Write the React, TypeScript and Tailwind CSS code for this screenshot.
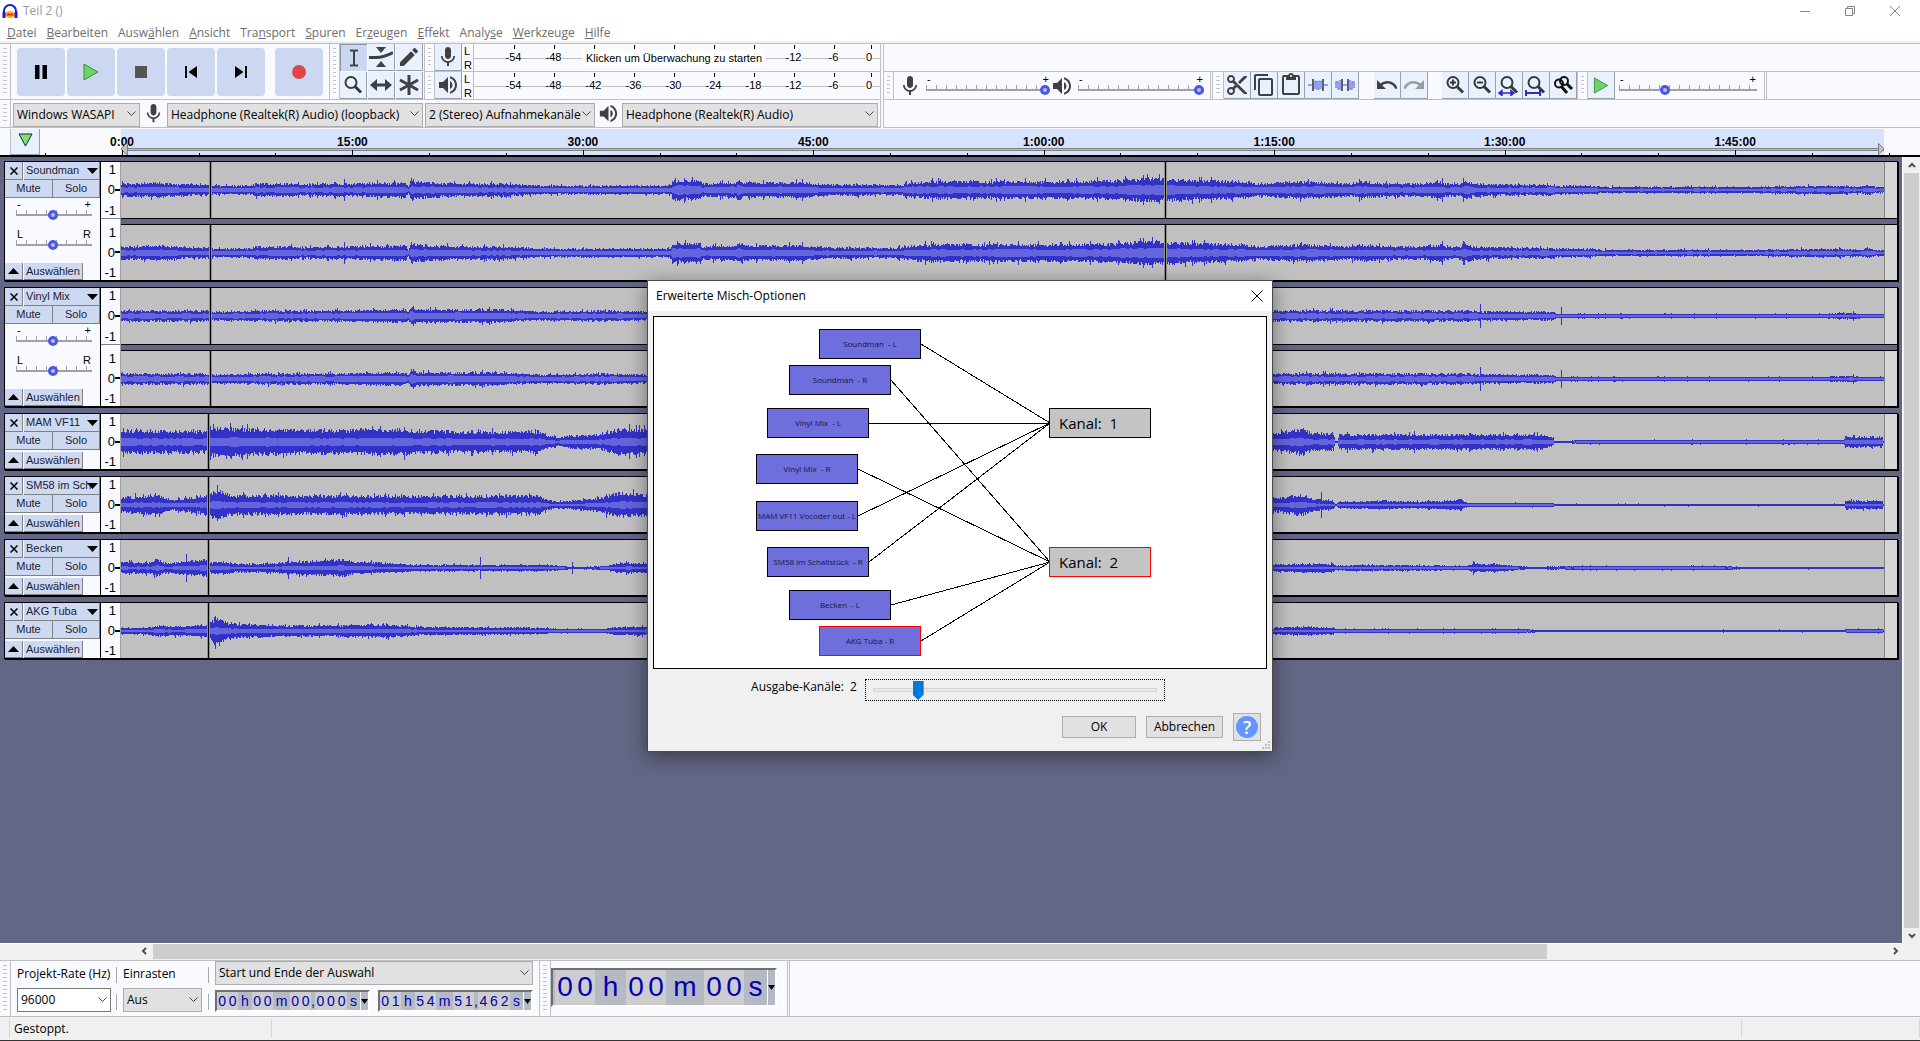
import { Fragment, ReactNode } from 'react';
import {
  MdContentCopy,
  MdContentCut,
  MdContentPaste,
  MdEdit,
  MdMic,
  MdRedo,
  MdSkipNext,
  MdSkipPrevious,
  MdUndo,
  MdVolumeUp,
} from 'react-icons/md';

// [x in px from clip start, peak height in px]
type Envelope = [number, number][];

interface Track {
  name: string;
  stereo: boolean;
  cuts: number[];
  envelope: Envelope;
  spikes: Envelope;
  seed: number;
  rms: number;
}

const CLIP_WIDTH = 1764;
const CHANNEL_CENTER = 28;

const tracks: Track[] = [
  {
    name: 'Soundman',
    stereo: true,
    cuts: [89, 1044],
    seed: 11,
    rms: 0.45,
    envelope: [
      [0, 6], [39, 7], [60, 5], [87, 5], [92, 4], [130, 4], [135, 6], [170, 6], [180, 5], [220, 6], [284, 7], [287, 3], [290, 10],
      [294, 8], [310, 7], [340, 6], [380, 6], [400, 5], [420, 4], [545, 4], [550, 5], [551, 9], [579, 9], [581, 6], [614, 7],
      [617, 10], [622, 7], [660, 7], [681, 7], [710, 5], [780, 5], [792, 7], [810, 8], [860, 8], [900, 8], [960, 8], [1000, 9],
      [1030, 11], [1070, 9], [1120, 8], [1139, 6], [1179, 8], [1185, 8], [1210, 7], [1230, 6], [1240, 8], [1264, 6], [1300, 6],
      [1319, 8], [1324, 6], [1339, 6], [1343, 9], [1352, 6], [1390, 5], [1433, 5], [1434, 4], [1469, 4], [1480, 3], [1580, 3],
      [1630, 3], [1710, 4], [1740, 3], [1746, 5], [1754, 3], [1763, 3],
    ],
    spikes: [[223, 11], [681, 11], [1022, 15], [1321, 12], [1342, 12]],
  },
  {
    name: 'Vinyl Mix',
    stereo: true,
    cuts: [89],
    seed: 47,
    rms: 0.52,
    envelope: [
      [0, 5], [60, 5], [88, 5], [92, 4], [140, 5], [200, 5], [284, 6], [287, 4], [290, 9], [296, 6], [370, 6], [400, 5],
      [420, 4], [480, 5], [520, 4], [900, 5], [1352, 5], [1360, 4], [1433, 4], [1435, 2], [1700, 2], [1729, 3], [1740, 2], [1763, 2],
    ],
    spikes: [[292, 10], [1359, 12], [1440, 9], [1732, 5]],
  },
  {
    name: 'MAM VF11',
    stereo: false,
    cuts: [87],
    seed: 83,
    rms: 0.34,
    envelope: [
      [0, 11], [85, 10], [88, 13], [180, 11], [284, 12], [290, 11], [380, 9], [419, 10], [421, 8], [436, 4], [450, 6], [480, 7],
      [497, 12], [527, 11], [900, 9], [1152, 8], [1181, 12], [1190, 8], [1212, 8], [1214, 1], [1216, 1], [1218, 7], [1345, 7],
      [1420, 7], [1432, 4], [1433, 1], [1449, 1], [1455, 2], [1723, 2], [1724, 5], [1761, 5], [1762, 1],
    ],
    spikes: [[497, 14], [1182, 14], [1293, 11]],
  },
  {
    name: 'SM58 im Schallstück',
    stereo: false,
    cuts: [87],
    seed: 131,
    rms: 0.3,
    envelope: [
      [0, 7], [35, 9], [50, 5], [80, 8], [88, 11], [96, 13], [112, 9], [180, 9], [300, 8], [419, 9], [421, 6], [436, 3],
      [475, 6], [497, 11], [527, 10], [900, 8], [1152, 6], [1181, 10], [1190, 6], [1212, 4], [1214, 1], [1218, 3], [1262, 4],
      [1300, 3], [1340, 5], [1346, 2], [1432, 2], [1433, 1], [1723, 1], [1724, 4], [1761, 4], [1762, 1],
    ],
    spikes: [[34, 12], [264, 12], [1200, 13]],
  },
  {
    name: 'Becken',
    stereo: false,
    cuts: [87],
    seed: 173,
    rms: 0.3,
    envelope: [
      [0, 5], [28, 5], [36, 8], [45, 4], [60, 6], [85, 8], [88, 5], [100, 6], [115, 4], [140, 4], [180, 6], [221, 8],
      [232, 6], [280, 4], [290, 3], [420, 3], [442, 2], [449, 1], [455, 1], [485, 2], [500, 5], [527, 4], [900, 4], [1152, 3],
      [1180, 4], [1212, 4], [1215, 2], [1235, 3], [1345, 2], [1353, 4], [1385, 3], [1395, 2], [1410, 1], [1460, 2], [1600, 2],
      [1625, 1], [1763, 1],
    ],
    spikes: [[65, 14], [167, 11], [359, 11], [451, 6], [1352, 7]],
  },
  {
    name: 'AKG Tuba',
    stereo: false,
    cuts: [87],
    seed: 211,
    rms: 0.34,
    envelope: [
      [0, 3], [20, 3], [39, 5], [60, 4], [85, 6], [88, 7], [94, 12], [105, 8], [120, 6], [180, 5], [264, 6], [285, 5], [295, 4],
      [419, 3], [440, 2], [480, 2], [500, 4], [527, 4], [900, 3], [1152, 3], [1184, 4], [1212, 3], [1214, 2], [1400, 2],
      [1420, 1], [1723, 1], [1725, 2], [1761, 2], [1762, 1],
    ],
    spikes: [[93, 14], [265, 8], [1187, 5]],
  },
];

// Deterministic noise so that the waveform is the same on every render
const noise = (n: number) => {
  const v = Math.sin(n * 12.9898) * 43758.5453;
  return v - Math.floor(v);
};

const buildWave = (track: Track, channel: number) => {
  const spikes = new Map(track.spikes);
  let peak = '';
  let rms = '';
  let seg = 0;
  for (let x = 0; x < CLIP_WIDTH; x++) {
    while (seg < track.envelope.length - 2 && track.envelope[seg + 1][0] <= x) seg++;
    const [x0, y0] = track.envelope[seg];
    const [x1, y1] = track.envelope[seg + 1];
    const level = y0 + ((y1 - y0) * Math.min(1, (x - x0) / (x1 - x0)));
    const n = x + track.seed * 1000 + channel * 7;
    const burst = noise(n * 3) > 0.92 ? 1.3 : 1;
    const up = spikes.get(x) ?? Math.max(1, Math.round(level * burst * (0.8 + 0.4 * noise(n))));
    const down = spikes.get(x) ?? Math.max(1, Math.round(level * burst * (0.8 + 0.4 * noise(n + 5000))));
    peak += `M${x} ${CHANNEL_CENTER - up}h1v${up + down}h-1z`;
    const inner = Math.round(level * track.rms * (0.85 + 0.3 * noise(Math.floor(n / 3))));
    const h = Math.min(inner, up - 1, down - 1);
    if (h > 0) rms += `M${x} ${CHANNEL_CENTER - h}h1v${h * 2}h-1z`;
  }
  return { peak, rms };
};

const menus: [string, number][] = [
  ['Datei', 0], ['Bearbeiten', 0], ['Auswählen', 4], ['Ansicht', 0], ['Transport', 3], ['Spuren', 0],
  ['Erzeugen', 2], ['Effekt', 0], ['Analyse', 5], ['Werkzeuge', 0], ['Hilfe', 0],
];

const meterMarks = ['-54', '-48', '-42', '-36', '-30', '-24', '-18', '-12', '-6'];
// These marks lie under the hint of an idle meter
const coveredMarks = ['-42', '-36', '-30', '-24', '-18'];
const timeMarks = ['0:00', '15:00', '30:00', '45:00', '1:00:00', '1:15:00', '1:30:00', '1:45:00'];

const mixInputs = [
  { label: 'Soundman  - L', x: 166, y: 13, out: 0 },
  { label: 'Soundman  - R', x: 136, y: 49, out: 1 },
  { label: 'Vinyl Mix  - L', x: 114, y: 92, out: 0 },
  { label: 'Vinyl Mix  - R', x: 103, y: 138, out: 1 },
  { label: 'MAM VF11 Vocoder out - L', x: 103, y: 185, out: 0 },
  { label: 'SM58 im Schallstück  - R', x: 114, y: 231, out: 0 },
  { label: 'Becken  - L', x: 136, y: 274, out: 1 },
  { label: 'AKG Tuba - R', x: 166, y: 310, out: 1, selected: true },
];
const mixOutputs = [
  { label: 'Kanal:  1', x: 396, y: 92 },
  { label: 'Kanal:  2', x: 396, y: 231, selected: true },
];

function Grabber({ narrow }: { narrow?: boolean }) {
  return (
    <div className={`shrink-0 self-stretch border-r border-[#c0c0c0] px-[3px] py-1 ${narrow ? 'w-2.5' : 'w-[11px]'}`}>
      <div className="h-full bg-[repeating-linear-gradient(#c4c4c4_0_1px,transparent_1px_4px)]" />
    </div>
  );
}

function Tile({ label, active, children }: { label: string; active?: boolean; children: ReactNode }) {
  return (
    <button
      aria-label={label}
      className={
        active
          ? 'flex size-[27px] shrink-0 items-center justify-center border-t border-l border-[#8f95a3] bg-[#c9d7f1] text-[#404040]'
          : 'flex size-[27px] shrink-0 items-center justify-center border-r border-b border-[#9a9fac] bg-[#eaf1fe] text-[#404040]'
      }
    >
      {children}
    </button>
  );
}

interface ComboProps {
  value: string;
  className: string;
  id?: string;
  label?: string;
  white?: boolean;
}

function Combo({ id, label, value, className, white }: ComboProps) {
  return (
    <div className={`relative h-6 shrink-0 ${className}`}>
      <select
        id={id}
        aria-label={label}
        defaultValue={value}
        className={`h-full w-full appearance-none border pl-[3px] text-[12px] text-black ${white ? 'border-[#7a7a7a] bg-white' : 'border-[#adadad] bg-[#e1e1e1]'}`}
      >
        <option>{value}</option>
      </select>
      <svg className="pointer-events-none absolute top-2 right-1 h-2 w-[9px]" viewBox="0 0 9 8" fill="none" stroke="#444">
        <path d="M.5 1.5 4.5 5.5 8.500 1.5" />
      </svg>
    </div>
  );
}

function Slider({ label, value, low, high, className }: { label: string; value: number; low: string; high: string; className: string }) {
  return (
    <div className={`flex shrink-0 flex-col ${className}`}>
      <div className="flex h-2.5 justify-between px-px text-[11px] leading-[10px] text-black">
        <span>{low}</span>
        <span>{high}</span>
      </div>
      <input
        type="range"
        aria-label={label}
        defaultValue={value}
        className="m-0 h-3 w-full appearance-none bg-[repeating-linear-gradient(to_right,#a0a0a0_0_1px,transparent_1px_10px)] bg-[length:100%_4px] bg-[position:0_1px] bg-no-repeat [&::-webkit-slider-runnable-track]:h-0.5 [&::-webkit-slider-runnable-track]:bg-[#a0a0a0] [&::-webkit-slider-thumb]:-mt-1 [&::-webkit-slider-thumb]:size-2.5 [&::-webkit-slider-thumb]:appearance-none [&::-webkit-slider-thumb]:rounded-full [&::-webkit-slider-thumb]:border-3 [&::-webkit-slider-thumb]:border-[#4a55ee] [&::-webkit-slider-thumb]:bg-[#c0c0c0]"
      />
    </div>
  );
}

function Meter({ label, icon, hint }: { label: string; icon: ReactNode; hint?: string }) {
  return (
    <div className="flex h-7 border-b border-[#c0c0c0]">
      <Grabber narrow />
      <Tile label={label}>{icon}</Tile>
      <div className="flex w-[11px] flex-col pl-0.5 text-[11px] leading-[14px] text-black">
        <span>L</span>
        <span>R</span>
      </div>
      <div className="relative flex flex-1 border-l border-[#c0c0c0] bg-[linear-gradient(#c0c0c0,#c0c0c0)] bg-[length:100%_1px] bg-[position:0_14px] bg-no-repeat pl-5 text-[11px] leading-3 text-black">
        {meterMarks.map((mark) => (
          <div key={mark} className="flex w-10 flex-col items-center">
            <span className="mt-px h-1 w-px bg-black" />
            {!(hint && coveredMarks.includes(mark)) && <span className="mt-0.5 bg-[#f8faff] pr-px">{mark}</span>}
          </div>
        ))}
        <div className="flex w-[18px] flex-col items-end">
          <span className="mt-px h-1 w-px bg-black" />
          <span className="mt-0.5 bg-[#f8faff] pl-px">0</span>
        </div>
        {hint && (
          <button className="absolute top-1.5 left-[108px] bg-white px-1 leading-4 whitespace-nowrap">{hint}</button>
        )}
      </div>
    </div>
  );
}

function Lens({ children }: { children?: ReactNode }) {
  return (
    <svg className="size-[22px]" viewBox="0 0 22 22" fill="none" stroke="#383838" strokeWidth="2">
      <circle cx="9" cy="8.500" r="5.500" />
      <path d="M13 12.500 19 18.500" strokeWidth="3" />
      {children}
    </svg>
  );
}

function PlayShape({ className }: { className: string }) {
  return (
    <svg className={className} viewBox="0 0 16 18">
      <path d="M1 1 15 9 1 17z" fill="#6fd36b" stroke="#3f8f3c" />
    </svg>
  );
}

function Transport() {
  const button = 'flex size-12 items-center justify-center rounded bg-[#ccd8f2] text-black';
  return (
    <div className="flex h-14 border-b border-[#c0c0c0]">
      <Grabber />
      <div className="flex items-center gap-0.5 pr-1.5 pl-1.5">
        <button aria-label="Pause" className={button}>
          <svg className="size-4" viewBox="0 0 16 16">
            <path d="M2 1h4.500v14H2zM9.500 1H14v14H9.500z" />
          </svg>
        </button>
        <button aria-label="Wiedergabe" className={button}>
          <PlayShape className="h-[18px] w-4" />
        </button>
        <button aria-label="Stopp" className={button}>
          <span className="size-3 bg-[#555]" />
        </button>
        <button aria-label="Zum Anfang" className={button}>
          <MdSkipPrevious className="size-6" />
        </button>
        <button aria-label="Zum Ende" className={button}>
          <MdSkipNext className="size-6" />
        </button>
        <button aria-label="Aufnahme" className={`${button} ml-2`}>
          <span className="size-3.5 rounded-full bg-[#e04646]" />
        </button>
      </div>
    </div>
  );
}

function ToolBox() {
  return (
    <div className="flex h-14 border-b border-l border-[#c0c0c0]">
      <Grabber narrow />
      <div className="grid grid-cols-3 gap-px pr-px">
        <Tile label="Auswahlwerkzeug" active>
          <svg className="size-5" viewBox="0 0 20 20" fill="none" stroke="#444" strokeWidth="2">
            <path d="M6 2.500h3l1 1 1-1h3M10 3v14M6 17.500h3l1-1 1 1h3" />
          </svg>
        </Tile>
        <Tile label="Hüllkurvenwerkzeug">
          <svg className="size-6" viewBox="0 0 24 24" fill="#404040">
            <path d="M7 2h10l-5 6zM7 22h10l-5-6z" />
            <path d="M0 12.500h7q8 0 17-5" fill="none" stroke="#404040" strokeWidth="3" />
          </svg>
        </Tile>
        <Tile label="Zeichenwerkzeug">
          <MdEdit className="size-6" />
        </Tile>
        <Tile label="Zoomwerkzeug">
          <Lens />
        </Tile>
        <Tile label="Verschiebewerkzeug">
          <svg className="size-6" viewBox="0 0 24 24" fill="#404040">
            <path d="M1 12 8 6v4.500h8V6l7 6-7 6v-4.500H8V18z" />
          </svg>
        </Tile>
        <Tile label="Multiwerkzeug">
          <svg className="size-6" viewBox="0 0 24 24" stroke="#404040" strokeWidth="3">
            <path d="M12 2v20M3 7l18 10M21 7 3 17" />
          </svg>
        </Tile>
      </div>
    </div>
  );
}

function DeviceBar() {
  return (
    <div className="flex h-7 items-center border-b border-[#c0c0c0]">
      <Grabber />
      <Combo label="Audio-Host" value="Windows WASAPI" className="ml-0.5 w-[127px]" />
      <MdMic className="mx-0.5 size-[23px] shrink-0 text-[#404040]" />
      <Combo label="Aufnahmegerät" value="Headphone (Realtek(R) Audio) (loopback)" className="w-64" />
      <Combo label="Aufnahmekanäle" value="2 (Stereo) Aufnahmekanäle" className="ml-0.5 w-[170px]" />
      <MdVolumeUp className="mx-0.5 size-[23px] shrink-0 text-[#404040]" />
      <Combo label="Wiedergabegerät" value="Headphone (Realtek(R) Audio)" className="w-64" />
    </div>
  );
}

function EditTools() {
  return (
    <>
      <Tile label="Ausschneiden"><MdContentCut className="size-6" /></Tile>
      <Tile label="Kopieren"><MdContentCopy className="size-6" /></Tile>
      <Tile label="Einfügen"><MdContentPaste className="size-6" /></Tile>
      <Tile label="Außerhalb der Auswahl löschen">
        <svg className="size-5" viewBox="0 0 20 20" fill="none" stroke="#7485f0" strokeWidth="1.500">
          <path d="M0 10h4M16 10h4M7 14V6.500h2V14h2V6.500h2V14" />
          <path d="M5 4v12M15 4v12" stroke="#606060" strokeWidth="2" />
        </svg>
      </Tile>
      <Tile label="Auswahl stummschalten">
        <svg className="size-5" viewBox="0 0 20 20" fill="none" stroke="#7485f0" strokeWidth="1.500">
          <path d="M1 13V7h2v7h2V5M8 10h4M15 5v9h2V7h2v6" />
          <path d="M7 4v12M13 4v12" stroke="#606060" strokeWidth="2" />
        </svg>
      </Tile>
      <div className="w-[15px]" />
      <Tile label="Rückgängig"><MdUndo className="size-6" /></Tile>
      <Tile label="Wiederholen"><MdRedo className="size-6 text-[#9a9a9a]" /></Tile>
      <div className="w-3.5" />
      <Tile label="Einzoomen"><Lens><path d="M6 8.500h6M9 5.500v6" /></Lens></Tile>
      <Tile label="Auszoomen"><Lens><path d="M6 8.500h6" /></Lens></Tile>
      <Tile label="Auswahl einpassen">
        <Lens><path d="M1 19h15M4 16.500 1 19l3 2.500zM13 16.500 16 19l-3 2.500z" stroke="#2b2bd0" strokeWidth="1.500" fill="#2b2bd0" /></Lens>
      </Tile>
      <Tile label="Projekt einpassen">
        <Lens><path d="M1 16v6M15 16v6M1 19h14" stroke="#2b2bd0" strokeWidth="2" /></Lens>
      </Tile>
      <Tile label="Zoom umschalten">
        <svg className="size-[22px]" viewBox="0 0 22 22" fill="none" stroke="#111" strokeWidth="2">
          <circle cx="7" cy="9.500" r="4" />
          <circle cx="12" cy="7" r="4" />
          <path d="m9 12 6 7M15 10l5 5" strokeWidth="3" />
        </svg>
      </Tile>
    </>
  );
}

function Toolbars() {
  return (
    <div className="flex border-t border-[#c0c0c0] bg-[#f8faff]">
      <div className="w-[881px] shrink-0 border-r border-[#c0c0c0]">
        <div className="flex">
          <Transport />
          <ToolBox />
          <div className="flex-1 border-l border-[#c0c0c0]">
            <Meter label="Aufnahmepegel" icon={<MdMic className="size-6" />} hint="Klicken um Überwachung zu starten" />
            <Meter label="Wiedergabepegel" icon={<MdVolumeUp className="size-6" />} />
          </div>
        </div>
        <DeviceBar />
      </div>
      <div className="ml-0.5 min-w-0 flex-1 border-l border-[#c0c0c0]">
        <div className="h-7 border-b border-[#c0c0c0]" />
        <div className="flex h-7 items-center border-b border-[#c0c0c0]">
          <Grabber narrow />
          <MdMic className="mx-1 size-6 shrink-0 text-[#404040]" />
          <Slider label="Aufnahmelautstärke" value={100} low="-" high="+" className="w-[124px] pb-0.5" />
          <MdVolumeUp className="mr-1 size-6 shrink-0 text-[#404040]" />
          <Slider label="Wiedergabelautstärke" value={100} low="-" high="+" className="w-[126px] pb-0.5" />
          <div className="ml-1.5 h-full w-[3px] shrink-0 border-x border-[#c0c0c0]" />
          <Grabber />
          <EditTools />
          <div className="h-full w-px bg-[#c0c0c0]" />
          <Grabber narrow />
          <Tile label="Abspielen mit Geschwindigkeit"><PlayShape className="h-[17px] w-4" /></Tile>
          <Slider label="Abspielgeschwindigkeit" value={32} low="-" high="+" className="ml-1 w-[138px] pb-0.5" />
          <div className="ml-[7px] h-full w-[3px] shrink-0 border-x border-[#c0c0c0]" />
        </div>
        <div className="h-7 border-b border-[#c0c0c0]" />
      </div>
    </div>
  );
}

function Timeline() {
  // 5 minutes are about 77px at this zoom level
  const minor = Array.from({ length: 25 }, (_, i) => Math.round(5 + i * 76.82));
  return (
    <div className="flex h-[29px] border-b-2 border-black bg-[#f8faff] pt-px">
      <div className="w-[11px] border-r border-[#c0c0c0]" />
      <button aria-label="Angeheftete Abspielposition" className="flex w-[29px] justify-center border-r border-b border-[#9a9fac] bg-[#eaf1fe] pt-1">
        <svg className="h-3.5 w-4" viewBox="0 0 16 14">
          <path d="M2 1h13L8.500 13z" fill="#7be078" stroke="#222" />
        </svg>
      </button>
      <svg className="h-full min-w-0 flex-1" shapeRendering="crispEdges">
        <rect x="81" width="1763" height="26" fill="#d5e3ff" />
        {timeMarks.map((mark, i) => (
          <text key={mark} x={82 + i * 230.45} y="17" textAnchor="middle" className="fill-black text-[12px] font-bold">
            {mark}
          </text>
        ))}
        <rect x="82" y="19" width="1762" height="3" fill="#c0c0c0" />
        <path d="M82 19.500H1844M82 21.500H1844" stroke="#808080" />
        <path d="M87 14v12l-6-6zM1838 14v12l6-6z" fill="#c0c0c0" stroke="#808080" />
        {minor.map((x, i) => (
          <rect key={x} x={x} y={i % 3 === 1 ? 21 : 24} width="1" height="6" fill="#000" />
        ))}
      </svg>
    </div>
  );
}

function VerticalRuler() {
  return (
    <div className="flex flex-1 flex-col justify-between pr-1 text-right text-[13px] leading-[15px] text-black">
      <span>1</span>
      <span className="-mr-1 flex items-center justify-end">0<span className="h-0.5 w-[5px] bg-black" /></span>
      <span>-1</span>
    </div>
  );
}

function Channel({ track, index }: { track: Track; index: number }) {
  const { peak, rms } = buildWave(track, index);
  return (
    <div className="flex min-h-0 flex-1 overflow-hidden bg-[#d6d6d6]">
      <svg width={CLIP_WIDTH} height="56" className="shrink-0 border-r border-[#808080] bg-[#c0c0c0]" shapeRendering="crispEdges">
        <path d={peak} fill="#3232c8" />
        <path d={rms} fill="#6464dc" />
        {track.cuts.map((x) => (
          <Fragment key={x}>
            <rect x={x - 1} width="3" height="56" fill="#909090" />
            <rect x={x} width="1" height="56" fill="#000" />
          </Fragment>
        ))}
      </svg>
    </div>
  );
}

function TrackRow({ track }: { track: Track }) {
  const button = 'overflow-hidden border-r border-b border-[#808080] bg-[#cdd9f1]';
  return (
    <section
      aria-label={track.name}
      className={`flex border border-black bg-[#f8faff] shadow-[1px_1px_0_#000] ${track.stereo ? 'h-[120px]' : 'h-[57px]'}`}
    >
      <div className="flex w-24 shrink-0 flex-col border-r border-black text-[11px] leading-[17px] text-[#1c1c30]">
        <div className="flex h-[18px]">
          <button aria-label="Spur schließen" className={`${button} flex w-[18px] items-center justify-center pl-px`}>
            <svg className="size-2" viewBox="0 0 8 8" stroke="#000" strokeWidth="1.500">
              <path d="m.5.5 7 7M7.500.5l-7 7" />
            </svg>
          </button>
          <button className={`${button} relative ml-px flex-1 pl-0.5 text-left whitespace-nowrap`}>
            {track.name.slice(0, 11)}
            <svg className="absolute top-1.5 right-px h-1.5 w-[11px]" viewBox="0 0 11 6">
              <path d="M0 0h11L5.500 6z" />
            </svg>
          </button>
        </div>
        <div className="flex h-[18px]">
          <button className={`${button} w-12`}>Mute</button>
          <button className={`${button} flex-1`}>Solo</button>
        </div>
        {track.stereo && (
          <div className="flex flex-col gap-2 pt-px pl-[11px]">
            <Slider label={`Lautstärke ${track.name}`} value={49} low="-" high="+" className="w-[76px]" />
            <Slider label={`Balance ${track.name}`} value={49} low="L" high="R" className="w-[76px]" />
          </div>
        )}
        <div className="mt-auto flex h-[17px]">
          <button aria-label="Spur einklappen" className={`${button} flex w-[18px] items-center justify-center`}>
            <svg className="h-1.5 w-[11px]" viewBox="0 0 11 6">
              <path d="M0 6h11L5.500 0z" />
            </svg>
          </button>
          <button className={`${button} ml-px w-[59px] pl-0.5 text-left`}>Auswählen</button>
        </div>
      </div>
      <div className="flex w-5 shrink-0 flex-col border-r border-[#a0a0a0]">
        <VerticalRuler />
        {track.stereo && <div className="mb-1.5 h-px bg-[#808080]" />}
        {track.stereo && <VerticalRuler />}
      </div>
      <div className="flex min-w-0 flex-1 flex-col">
        <Channel track={track} index={0} />
        {track.stereo && <div className="h-[7px] border-y border-black bg-[#636684]" />}
        {track.stereo && <Channel track={track} index={1} />}
      </div>
    </section>
  );
}

function Arrow({ d }: { d: string }) {
  return (
    <svg className="size-4" viewBox="0 0 16 16" fill="none" stroke="#505050" strokeWidth="2">
      <path d={d} />
    </svg>
  );
}

function TrackArea() {
  return (
    <main className="flex min-h-0 flex-1 flex-col">
      <div className="flex min-h-0 flex-1">
        <div className="flex min-w-0 flex-1 flex-col gap-1.5 overflow-hidden border-r border-b border-white bg-[#636684] pt-1 pr-1 pl-1">
          {tracks.map((track) => (
            <TrackRow key={track.name} track={track} />
          ))}
        </div>
        <div className="flex w-[17px] flex-col items-center bg-[#f0f0f0]">
          <Arrow d="m5 10 3-3 3 3" />
          <div className="w-[15px] flex-1 bg-[#cdcdcd]" />
          <Arrow d="m5 6 3 3 3-3" />
        </div>
      </div>
      <div className="flex h-4 shrink-0 bg-[#f0f0f0] pr-[17px] pl-[137px]">
        <Arrow d="m9 4-3 3 3 3" />
        <div className="h-[15px] w-[1394px] bg-[#cdcdcd]" />
        <div className="flex-1" />
        <Arrow d="m7 4 3 3-3 3" />
      </div>
    </main>
  );
}

function Time({ groups, big }: { groups: [string, string][]; big?: boolean }) {
  return (
    <div
      role="timer"
      className={`flex shrink-0 items-stretch border-2 border-r-white border-b-white border-t-[#707070] border-l-[#707070] bg-[#b4b9c4] text-[#0000b0] ${big ? 'h-[39px] pl-0.5 text-[28px] leading-[34px]' : 'h-[22px] text-[14px] leading-[18px]'}`}
    >
      {groups.map(([text, width], i) => (
        <span key={i} className={`flex justify-around ${width} ${/\d/.test(text) ? 'bg-[#cdcdcf]' : ''}`}>
          {[...text].map((c, j) => (
            <span key={j}>{c}</span>
          ))}
        </span>
      ))}
      <button aria-label="Format" className="flex w-2 items-center justify-center border-l border-white">
        <svg className="h-[5px] w-[7px] shrink-0" viewBox="0 0 7 5">
          <path d="M0 0h7L3.500 5z" />
        </svg>
      </button>
    </div>
  );
}

function SelectionBar() {
  const time = (t: string[]): [string, string][] => [
    [t[0], 'w-[21px]'], ['h', 'w-[14px]'], [t[1], 'w-[21px]'], ['m', 'w-[17px]'], [t[2], 'w-[21px]'],
    [',', 'w-1'], [t[3], 'w-8'], ['s', 'w-[13px]'],
  ];
  return (
    <div className="flex h-[57px] shrink-0 border-y border-[#c0c0c0] bg-[#f8faff] text-[12px] text-black">
      <Grabber />
      <div className="flex flex-col justify-between pt-1 pb-1 pl-1.5">
        <label htmlFor="rate" className="leading-[18px]">Projekt-Rate (Hz)</label>
        <Combo id="rate" value="96000" white className="w-[94px]" />
      </div>
      <div className="mr-1.5 ml-[5px] flex flex-col justify-between py-1.5">
        <span className="h-4 w-px bg-[#a8a8a8]" />
        <span className="h-4 w-px bg-[#a8a8a8]" />
      </div>
      <div className="flex flex-col justify-between pt-1 pb-1">
        <label htmlFor="snap" className="leading-[18px]">Einrasten</label>
        <Combo id="snap" value="Aus" className="w-[79px]" />
      </div>
      <div className="mx-1.5 flex flex-col justify-between py-1.5">
        <span className="h-4 w-px bg-[#a8a8a8]" />
        <span className="h-4 w-px bg-[#a8a8a8]" />
      </div>
      <div className="flex flex-col justify-between pb-1">
        <Combo label="Auswahlmodus" value="Start und Ende der Auswahl" className="w-[318px]" />
        <div className="flex justify-between">
          <Time groups={time(['00', '00', '00', '000'])} />
          <Time groups={time(['01', '54', '51', '462'])} />
        </div>
      </div>
      <div className="ml-1.5 w-px bg-[#c0c0c0]" />
      <Grabber />
      <div className="pt-[7px]">
        <Time
          big
          groups={[['00', 'w-10'], ['h', 'w-[31px]'], ['00', 'w-10'], ['m', 'w-[38px]'], ['00', 'w-10'], ['s', 'w-[23px]']]}
        />
      </div>
      <div className="ml-2.5 w-[3px] border-x border-[#c0c0c0]" />
    </div>
  );
}

function MixDialog() {
  return (
    <div
      role="dialog"
      aria-labelledby="mix-title"
      className="absolute top-[280px] left-[647px] flex w-[626px] flex-col border border-[#4a4a4a] bg-[#f0f0f0] text-[12px] text-black shadow-[0_4px_18px_rgba(0,0,0,0.45)]"
    >
      <div className="flex h-[30px] items-center justify-between bg-white pr-[9px] pl-2">
        <h2 id="mix-title">Erweiterte Misch-Optionen</h2>
        <button aria-label="Schließen">
          <svg className="size-3" viewBox="0 0 12 12" stroke="#000">
            <path d="m.5.5 11 11M11.500.5l-11 11" />
          </svg>
        </button>
      </div>
      <div className="relative mx-[5px] mt-[5px] h-[353px] border border-black bg-white">
        <svg className="size-full" shapeRendering="crispEdges" stroke="#000">
          {mixInputs.map((n) => (
            <line key={n.label} x1={n.x + 101} y1={n.y + 14} x2={mixOutputs[n.out].x} y2={mixOutputs[n.out].y + 14} />
          ))}
        </svg>
        {mixInputs.map((n) => (
          <button
            key={n.label}
            style={{ left: n.x - 1, top: n.y - 1 }}
            className={`absolute flex h-[30px] w-[102px] items-center justify-center border bg-[#6e6edc] text-[8px] whitespace-pre text-[#181840] ${n.selected ? 'border-[#ff0000]' : 'border-black'}`}
          >
            {n.label}
          </button>
        ))}
        {mixOutputs.map((n) => (
          <button
            key={n.label}
            style={{ left: n.x - 1, top: n.y - 1 }}
            className={`absolute flex h-[30px] w-[102px] items-center border bg-[#c4c4c4] pl-[9px] text-[15px] whitespace-pre ${n.selected ? 'border-[#ff0000]' : 'border-black'}`}
          >
            {n.label}
          </button>
        ))}
      </div>
      <div className="mt-2.5 flex items-start justify-center pr-1">
        <label htmlFor="channels" className="mr-2 leading-4 whitespace-pre">Ausgabe-Kanäle:  2</label>
        <div className="flex h-[22px] w-[300px] items-center border border-dotted border-black px-[7px]">
          <input
            id="channels"
            type="range"
            min={1}
            max={8}
            defaultValue={2}
            className="m-0 h-5 w-full appearance-none bg-transparent [&::-webkit-slider-runnable-track]:h-1 [&::-webkit-slider-runnable-track]:border [&::-webkit-slider-runnable-track]:border-[#d6d6d6] [&::-webkit-slider-runnable-track]:bg-[#e7eaea] [&::-webkit-slider-thumb]:-mt-2 [&::-webkit-slider-thumb]:h-[19px] [&::-webkit-slider-thumb]:w-[11px] [&::-webkit-slider-thumb]:appearance-none [&::-webkit-slider-thumb]:bg-[#0078d7] [&::-webkit-slider-thumb]:[clip-path:polygon(0_0,100%_0,100%_72%,50%_100%,0_72%)]"
          />
        </div>
      </div>
      <div className="mt-3 flex items-center justify-end gap-2.5 pr-[11px]">
        <button className="h-[22px] w-[74px] border border-[#adadad] bg-[#e1e1e1]">OK</button>
        <button className="h-[22px] w-[77px] border border-[#adadad] bg-[#e1e1e1]">Abbrechen</button>
        <button aria-label="Hilfe" className="flex size-7 items-center justify-center border border-[#adadad] bg-[#e1e1e1]">
          <span className="flex size-[22px] items-center justify-center rounded-full bg-[#6496ff] text-[18px] leading-none font-semibold text-white">?</span>
        </button>
      </div>
      <svg className="mr-0.5 mb-0.5 size-2 self-end" viewBox="0 0 8 8" fill="#bfbfbf">
        <path d="M6 0h2v2H6zM3 3h2v2H3zM6 3h2v2H6zM0 6h2v2H0zM3 6h2v2H3zM6 6h2v2H6z" />
      </svg>
    </div>
  );
}

export default function App() {
  return (
    <div className="relative flex h-screen min-h-[900px] flex-col overflow-hidden border-b border-[#333] bg-white font-['Liberation_Sans',sans-serif]">
      <header className="flex h-[22px] shrink-0 items-center font-['Open_Sans',sans-serif] text-[12px] text-[#999]">
        <svg className="ml-0.5 h-4 w-4" viewBox="0 0 16 16" fill="none">
          <ellipse cx="8" cy="11.500" rx="5" ry="3.500" fill="#ffb020" />
          <path d="M4 12.500 6 10l2 1 2-1 2 2.500z" fill="#e8281c" />
          <path d="M2 10V8a6 6 0 0 1 12 0v2" stroke="#1a1ad0" strokeWidth="2" />
          <path d="M2 9v6M14 9v6" stroke="#1a1ad0" strokeWidth="3" />
        </svg>
        <h1 className="ml-[5px]">Teil 2 ()</h1>
        <div className="ml-auto flex items-center gap-[35px] pr-5">
          <button aria-label="Minimieren">
            <svg className="size-2.5" viewBox="0 0 10 10" stroke="#888"><path d="M0 5.500h10" /></svg>
          </button>
          <button aria-label="Verkleinern">
            <svg className="size-2.5" viewBox="0 0 10 10" fill="none" stroke="#888"><path d="M.5 2.500h7v7h-7zM2.500 2V.5h7v7H8" /></svg>
          </button>
          <button aria-label="Beenden">
            <svg className="size-2.5" viewBox="0 0 10 10" stroke="#888"><path d="m0 0 10 10M10 0 0 10" /></svg>
          </button>
        </div>
      </header>
      <nav className="flex h-[21px] shrink-0 gap-2.5 border-b-2 border-[#f0f0f0] pt-0.5 pl-[7px] font-['Open_Sans',sans-serif] text-[12px] leading-[18px] text-[#6d6d6d]">
        {menus.map(([name, key]) => (
          <button key={name}>
            {name.slice(0, key)}
            <u>{name[key]}</u>
            {name.slice(key + 1)}
          </button>
        ))}
      </nav>
      <div className="shrink-0 [&_select]:font-['Open_Sans',sans-serif]">
        <Toolbars />
      </div>
      <div className="shrink-0">
        <Timeline />
      </div>
      <TrackArea />
      <div className="shrink-0 [&_label]:font-['Open_Sans',sans-serif] [&_select]:font-['Open_Sans',sans-serif]">
        <SelectionBar />
      </div>
      <footer className="flex h-[23px] shrink-0 bg-[#f0f0f0] py-0.5 font-['Open_Sans',sans-serif] text-[12px] leading-5 text-black">
        <div className="w-2.5 border-r border-[#d7d7d7]" />
        <div className="w-[262px] border-r border-[#d7d7d7] pl-1">Gestoppt.</div>
        <div className="flex-1 border-r border-[#d7d7d7]" />
        <div className="w-[178px] border-r border-[#d7d7d7]" />
      </footer>
      <div className="font-['Open_Sans',sans-serif]">
        <MixDialog />
      </div>
    </div>
  );
}
